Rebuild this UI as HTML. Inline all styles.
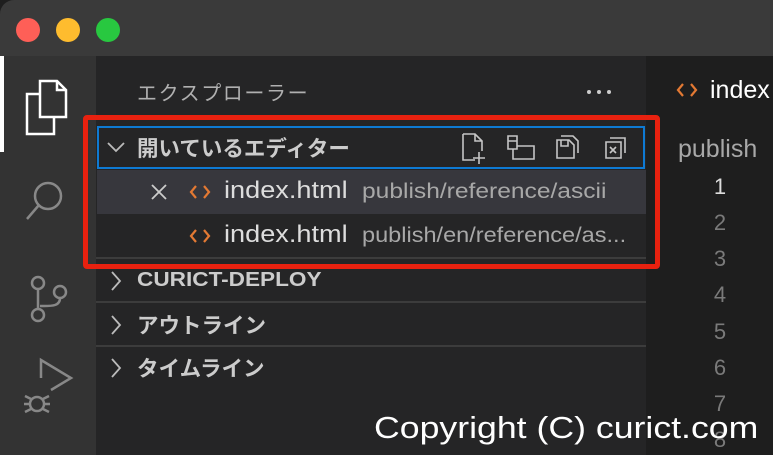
<!DOCTYPE html>
<html><head><meta charset="utf-8"><style>
*{margin:0;padding:0;box-sizing:border-box}
html,body{width:773px;height:455px;overflow:hidden}
body{background:#1e1e1e;font-family:"Liberation Sans","Noto Sans CJK JP",sans-serif;position:relative}
.a{position:absolute}
.title{left:0;top:0;width:773px;height:56px;background:#3a3a3a;border-top-left-radius:14px}
.dot{top:18px;width:24px;height:24px;border-radius:50%}
.act{left:0;top:56px;width:96px;height:399px;background:#333333}
.side{left:96px;top:56px;width:550px;height:399px;background:#252526}
.t{color:#ccc;white-space:nowrap;transform-origin:0 50%}
.sep{left:96px;width:550px;height:2px;background:#3c3c3c}
</style></head><body>
<div class="a title"></div>
<div class="a dot" style="left:16px;background:#fe5f57"></div>
<div class="a dot" style="left:56px;background:#febc2e"></div>
<div class="a dot" style="left:96px;background:#28c840"></div>
<div class="a act"></div>
<div class="a" style="left:0;top:56px;width:4px;height:96px;background:#fff"></div>
<svg class="a" style="left:0;top:56px" width="96" height="399" fill="none" stroke-width="2.5">
<g stroke="#fff"><path d="M40 25h17l9 9v27H40z M57 25v9h9"/><path d="M40 38H27v40h27V61"/></g>
<g stroke="#888"><circle cx="48" cy="140" r="13"/><path d="M39 149L27 163"/>
<circle cx="38" cy="227" r="6"/><circle cx="38" cy="259" r="6"/><circle cx="60" cy="236" r="6"/><path d="M38 233v20 M60 242c0 8-8 8-16 8h-4"/>
<path d="M41 322v-18l30 18-20 12"/><circle cx="37" cy="348" r="7"/><path d="M25 340l6 3 M25 356l6-3 M49 340l-6 3 M49 356l-6-3 M24 348h6 M44 348h6"/></g>
</svg>
<div class="a side"></div>
<div class="a t" style="left:137px;top:77px;font-size:20px;letter-spacing:1.6px;color:#b0b0b0">エクスプローラー</div>
<svg class="a" style="left:586px;top:88px" width="30" height="8"><g fill="#ccc"><circle cx="3" cy="4" r="2"/><circle cx="13" cy="4" r="2"/><circle cx="23" cy="4" r="2"/></g></svg>
<div class="a" style="left:97px;top:170px;width:549px;height:44px;background:#37373d"></div>
<div class="a" style="left:97px;top:126px;width:548px;height:43px;border:2px solid #0e7ad3"></div>
<svg class="a" style="left:106px;top:140px" width="20" height="14"><path d="M2 3l8 8 8-8" stroke="#bbb" stroke-width="1.8" fill="none"/></svg>
<div class="a t" style="left:137px;top:132px;font-size:21.5px;font-weight:bold">開いているエディター</div>
<svg class="a" style="left:455px;top:128px" width="190" height="40" fill="none" stroke="#c5c5c5" stroke-width="1.6">
<path d="M8 6h12l7 7v10 M20 6v7h7 M8 6v26h12 M24 24v12 M18 30h12"/>
<path d="M53 8h9v13h-9z M53 13h9 M58 21v10h21V18H62"/>
<path d="M102 12h12l5 5v13h-17z M106 12v6h7v-6 M106 8h12l5 5v12"/>
<path d="M151 14h15v16h-15z M155 10h15v15 M155 19l6 6 M161 19l-6 6"/>
</svg>
<svg class="a" style="left:150px;top:183px" width="18" height="18"><path d="M2 2l14 14M16 2L2 16" stroke="#ccc" stroke-width="1.8"/></svg>
<svg class="a" style="left:189px;top:184px" width="22" height="16" fill="none" stroke="#e37933" stroke-width="2.2"><path d="M7 2L2 8l5 6 M15 2l5 6-5 6"/></svg>
<div class="a t" style="left:224px;top:177px;font-size:24px;color:#ddd;transform:scaleX(1.13)">index.html</div>
<div class="a t" style="left:362px;top:180px;font-size:21px;color:#a8a8a8;transform:scaleX(1.17)">publish/reference/ascii</div>
<svg class="a" style="left:189px;top:228px" width="22" height="16" fill="none" stroke="#e37933" stroke-width="2.2"><path d="M7 2L2 8l5 6 M15 2l5 6-5 6"/></svg>
<div class="a t" style="left:224px;top:221px;font-size:24px;color:#ddd;transform:scaleX(1.13)">index.html</div>
<div class="a t" style="left:362px;top:224px;font-size:21px;color:#a8a8a8;transform:scaleX(1.12)">publish/en/reference/as...</div>
<div class="a sep" style="top:257px"></div>
<div class="a sep" style="top:301px"></div>
<div class="a sep" style="top:345px"></div>
<svg class="a" style="left:108px;top:270px" width="16" height="110" fill="none" stroke="#bbb" stroke-width="1.8"><path d="M4 2l8 9-8 9 M4 46l8 9-8 9 M4 89l8 9-8 9"/></svg>
<div class="a t" style="left:137px;top:269px;font-size:20px;font-weight:bold;transform:scaleX(1.13)">CURICT-DEPLOY</div>
<div class="a t" style="left:137px;top:309px;font-size:21.5px;font-weight:bold">アウトライン</div>
<div class="a t" style="left:137px;top:352px;font-size:21.5px;font-weight:bold">タイムライン</div>
<div class="a" style="left:83px;top:115px;width:577px;height:154px;border:5px solid #e8210f;border-radius:4px"></div>
<svg class="a" style="left:676px;top:82px" width="22" height="16" fill="none" stroke="#e37933" stroke-width="2.2"><path d="M7 2L2 8l5 6 M15 2l5 6-5 6"/></svg>
<div class="a t" style="left:710px;top:76px;font-size:25px;color:#fff">index</div>
<div class="a t" style="left:678px;top:135px;font-size:25px;color:#a8a8a8">publish</div>
<div class="a t" style="left:713px;top:169px;font-size:22px;color:#ddd;line-height:36px;text-align:center;width:14px">1</div>
<div class="a t" style="left:713px;top:205px;font-size:22px;color:#7a7a7a;line-height:36.2px;text-align:center;width:14px">2<br>3<br>4<br>5<br>6<br>7<br>8</div>
<div class="a t" style="left:374px;top:410px;font-size:31px;color:#fff;transform:scaleX(1.15)">Copyright (C) curict.com</div>
</body></html>
